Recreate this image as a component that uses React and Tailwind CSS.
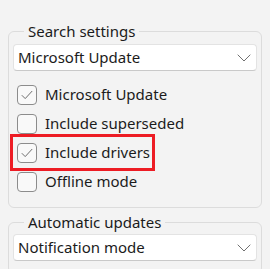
import { useState } from 'react';

const SEARCH_OPTIONS = [
  { id: 'mu', label: 'Microsoft Update', checked: true },
  { id: 'sup', label: 'Include superseded', checked: false },
  { id: 'drv', label: 'Include drivers', checked: true, highlight: true },
  { id: 'off', label: 'Offline mode', checked: false },
];

// Win11-style combo box
function Select({ value }) {
  return (
    <div className="flex h-[27px] items-center justify-between rounded-[4px] border border-[#e3e3e3] border-b-[#c9c9c9] bg-white pl-[4px] pr-[5px]">
      <span className="text-[15px] leading-none text-[#1b1b1b]">{value}</span>
      <svg width="14" height="8" viewBox="0 0 14 8">
        <path d="M0.7 0.7 L7 7 L13.3 0.7" fill="none" stroke="#707070" strokeWidth="1" />
      </svg>
    </div>
  );
}

function Checkbox({ label, checked, highlight, onToggle }) {
  return (
    <div className="relative flex h-[29px] items-center pl-[4px]" onClick={onToggle}>
      <div className="flex h-[20px] w-[20px] items-center justify-center rounded-[4px] border border-[#8c8c8c] bg-[#f9f9f9]">
        {checked && (
          <svg width="12" height="10" viewBox="0 0 12 10">
            <path d="M0.8 5.2 L4.2 8.6 L11.2 1" fill="none" stroke="#6e6e6e" strokeWidth="1" />
          </svg>
        )}
      </div>
      <span className="ml-[8px] text-[15px] leading-none text-[#1b1b1b]">{label}</span>
      {highlight && (
        <div className="pointer-events-none absolute left-[-3px] top-[-4px] h-[37px] w-[145px] border-[3px] border-[#ed1c24]" />
      )}
    </div>
  );
}

function Group({ title, children, className = '' }) {
  return (
    <fieldset className={`rounded-[6px] border border-[#dcdcdc] px-[4px] ${className}`}>
      <legend className="ml-[11px] px-[4px] text-[15px] leading-[20px] text-[#1b1b1b]">{title}</legend>
      {children}
    </fieldset>
  );
}

export default function App() {
  const [opts, setOpts] = useState(SEARCH_OPTIONS);

  const toggle = id =>
    setOpts(prev => prev.map(o => (o.id === id ? { ...o, checked: !o.checked } : o)));

  return (
    <div
      className="h-[269px] w-[270px] overflow-hidden bg-[#f3f3f3] pl-[8px] pr-[8px] pt-[21px]"
      style={{ fontFamily: '"Noto Sans", "Open Sans", sans-serif' }}
    >
      <Group title="Search settings" className="pb-[11px]">
        <div className="pt-[3px]">
          <Select value="Microsoft Update" />
        </div>
        <div className="mt-[9px] flex flex-col">
          {opts.map(o => (
            <Checkbox key={o.id} {...o} onToggle={() => toggle(o.id)} />
          ))}
        </div>
      </Group>

      <Group title="Automatic updates" className="mt-[4px] pb-[12px]">
        <div className="pt-[2px]">
          <Select value="Notification mode" />
        </div>
      </Group>
    </div>
  );
}
